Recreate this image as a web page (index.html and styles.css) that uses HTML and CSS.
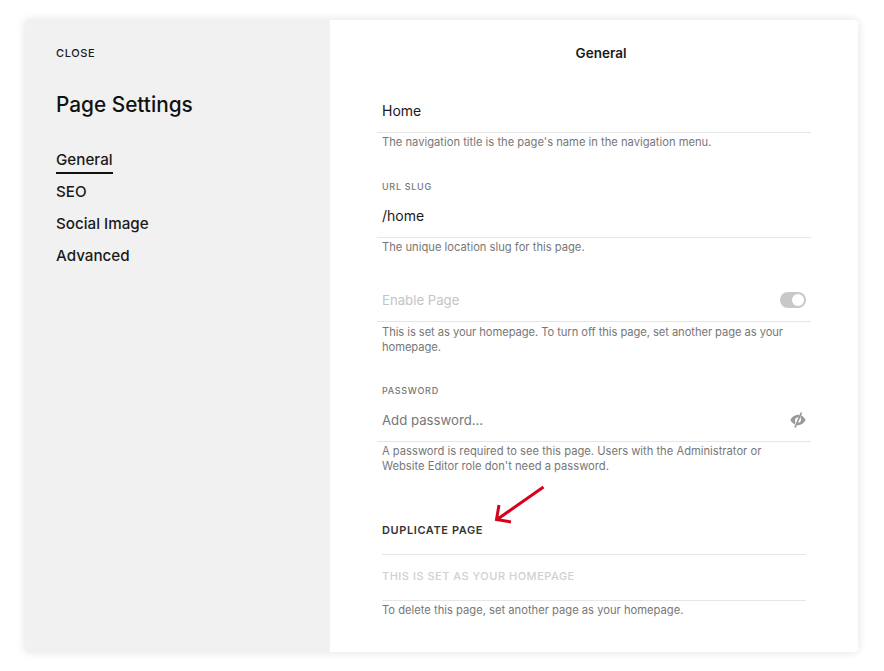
FILE: index.html
```html
<!DOCTYPE html>
<html lang="en">
<head>
<meta charset="UTF-8">
<meta name="viewport" content="width=device-width, initial-scale=1.0">
<title>Page Settings</title>
<link rel="stylesheet" href="styles.css">
</head>
<body>

<div class="panel">
  <aside class="sidebar">
    <div class="close">CLOSE</div>
    <h1 class="sidebar-title">Page Settings</h1>
    <nav class="nav">
      <div class="nav-item"><span class="nav-active">General</span></div>
      <div class="nav-item">SEO</div>
      <div class="nav-item">Social Image</div>
      <div class="nav-item">Advanced</div>
    </nav>
  </aside>

  <main class="content">
    <h2 class="content-title">General</h2>

    <div class="field field-first">
      <div class="field-row">Home</div>
      <p class="help">The navigation title is the page's name in the navigation menu.</p>
    </div>

    <div class="field field-slug">
      <div class="label">URL SLUG</div>
      <div class="field-row">/home</div>
      <p class="help">The unique location slug for this page.</p>
    </div>

    <div class="field field-enable">
      <div class="field-row muted">
        <span>Enable Page</span>
        <span class="toggle"></span>
      </div>
      <p class="help">This is set as your homepage. To turn off this page, set another page as your homepage.</p>
    </div>

    <div class="field field-password">
      <div class="label">PASSWORD</div>
      <div class="field-row placeholder">
        <span>Add password...</span>
        <svg class="eye" width="16" height="16" viewBox="0 0 16 16">
          <path d="M4.800 12.400C2.800 11.400 1.200 9.800.4 8c1.400-3 4.400-5.200 7.600-5.200.5 0 1 .1 1.500.2L8.700 5.200C6.700 5 5 6.400 4.900 8.200c0 .7.200 1.300.5 1.800z" fill="#999"/>
          <path d="M11.200 3.600c2 1 3.600 2.600 4.400 4.400-1.400 3-4.400 5.200-7.600 5.200-.5 0-1-.1-1.500-.2l.8-2.200c2 .2 3.700-1.200 3.800-3 0-.7-.2-1.300-.5-1.800z" fill="#999"/>
          <path d="M11.500.5 5 15.500" stroke="#999" stroke-width="1.800" fill="none"/>
        </svg>
      </div>
      <p class="help">A password is required to see this page. Users with the Administrator or Website Editor role don't need a password.</p>
    </div>

    <div class="duplicate">DUPLICATE PAGE</div>
    <div class="delete-row">THIS IS SET AS YOUR HOMEPAGE</div>
    <p class="help">To delete this page, set another page as your homepage.</p>

    <svg class="arrow" width="60" height="50" viewBox="0 0 60 50">
      <path d="M52.500 2 6 34.500M8 20 5.500 34.500 20 37" stroke="#d8001a" stroke-width="3" fill="none"/>
    </svg>
  </main>
</div>

</body>
</html>
```

FILE: styles.css
```css
* {
  box-sizing: border-box;
}
body {
  margin: 0;
  padding: 20px 26px 19px 25px;
  background-color: #fff;
  font-family: Inter, 'Liberation Sans', sans-serif;
  color: #1a1a1a;
}
.panel {
  display: flex;
  height: 632px;
  background-color: #fff;
  border-radius: 4px;
  box-shadow: 0px 0px 10px 0px rgba(0,0,0,0.12);
}
.sidebar {
  width: 305px;
  flex-shrink: 0;
  background-color: #f1f1f1;
  border-radius: 4px 0 0 4px;
  padding: 27px 31px;
}
.close {
  font-size: 11px;
  line-height: 13px;
  font-weight: 500;
  letter-spacing: 0.6px;
}
.sidebar-title {
  margin: 30px 0 0;
  font-size: 20.800px;
  line-height: 30px;
  font-weight: 500;
  color: #111;
}
.nav {
  margin-top: 24px;
}
.nav-item {
  height: 32px;
  font-size: 15.200px;
  line-height: 32px;
  font-weight: 500;
}
.nav-active {
  display: inline-block;
  height: 27px;
  line-height: 26px;
  border-bottom: 2px solid #111;
}
.content {
  position: relative;
  flex: 1;
  padding: 25px 47px 0;
}
.content-title {
  margin: 0;
  padding-left: 14px;
  font-size: 13.500px;
  line-height: 17px;
  font-weight: 600;
  text-align: center;
}
.field-row {
  display: flex;
  justify-content: space-between;
  align-items: center;
  height: 44px;
  padding: 0 5px;
  font-size: 14px;
  border-bottom: 1px solid #e6e6e6;
}
.field-first {
  margin-top: 27px;
}
.field-slug {
  margin-top: 31px;
}
.field-enable {
  margin-top: 23px;
}
.field-enable .help {
  margin-top: 3px;
  letter-spacing: -0.07px;
}
.field-password {
  margin-top: 30px;
}
.label {
  padding: 0 0 1px 5px;
  font-size: 9px;
  line-height: 12px;
  font-weight: 500;
  letter-spacing: 0.7px;
  color: #777;
}
.muted {
  font-size: 13.200px;
  color: #c4c4c4;
}
.placeholder {
  font-size: 13.200px;
  color: #777;
}
.help {
  margin: 2px 0 0;
  padding: 0 5px;
  font-size: 11.200px;
  line-height: 15px;
  color: #777;
}
.toggle {
  position: relative;
  width: 26px;
  height: 16px;
  border-radius: 8px;
  background-color: #c8c8c8;
}
.toggle::after {
  content: "";
  position: absolute;
  top: 2px;
  right: 2px;
  width: 12px;
  height: 12px;
  border-radius: 50%;
  background-color: #fff;
}
.duplicate {
  margin-top: 49px;
  padding-left: 5px;
  font-size: 11px;
  line-height: 14px;
  font-weight: 600;
  letter-spacing: 0.6px;
  color: #333;
}
.delete-row {
  margin: 17px 5px 0;
  padding-top: 14px;
  height: 47px;
  border-top: 1px solid #e6e6e6;
  border-bottom: 1px solid #e6e6e6;
  font-size: 11px;
  line-height: 14px;
  font-weight: 500;
  letter-spacing: 0.5px;
  color: #d0d0d0;
}
.arrow {
  position: absolute;
  left: 161px;
  top: 465px;
}
```
